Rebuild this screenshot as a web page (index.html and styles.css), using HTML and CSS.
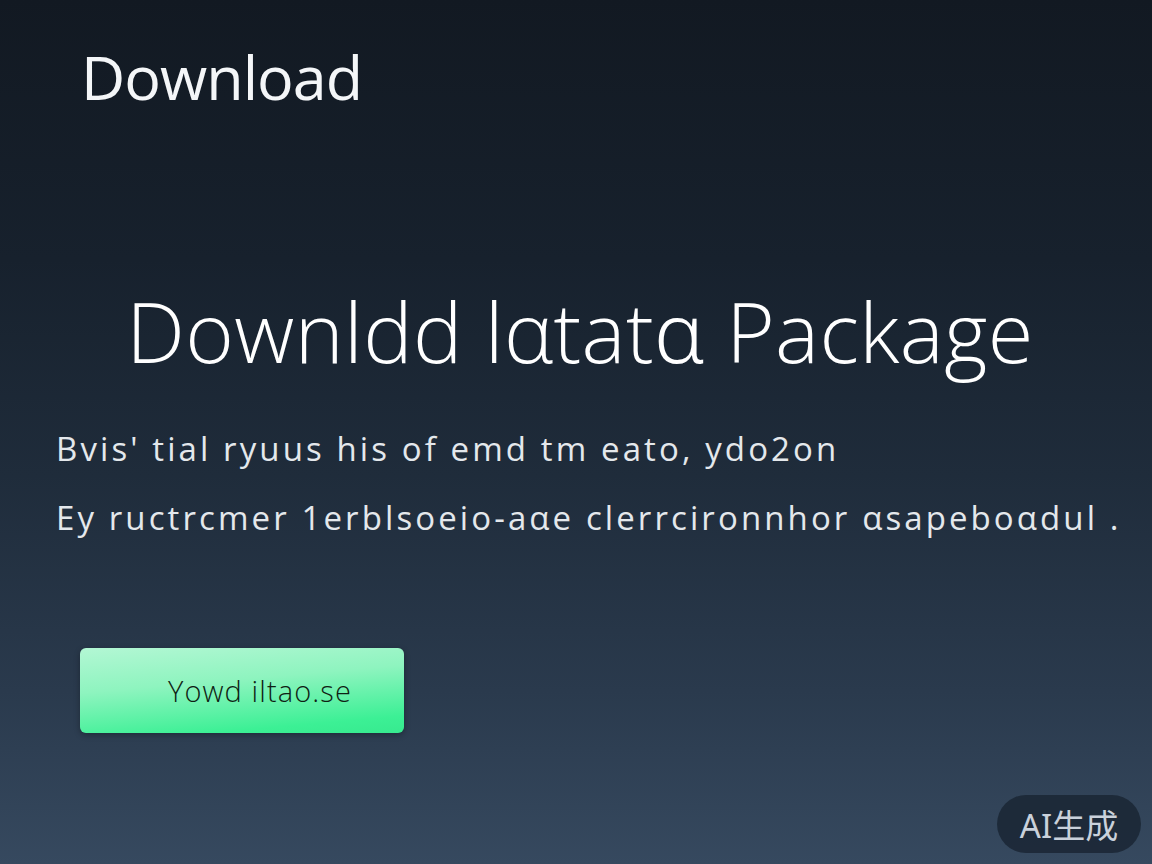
FILE: index.html
```html
<!DOCTYPE html>
<html lang="en">
<head>
<meta charset="utf-8">
<title>Download</title>
<link rel="stylesheet" href="styles.css">
</head>
<body>
<main class="page">
  <header class="top">
    <h1 class="brand">Download</h1>
  </header>
  <section class="hero">
    <h2 class="headline">Downldd lαtatɑ Package</h2>
    <p class="desc">Bvis' tial ryuus his of emd tm eato, ydo2on</p>
    <p class="desc">Ey ructrcmer 1erblsoeio-aαe clerrcironnhor αsapeboαdul .</p>
    <div class="actions">
      <button class="cta">Yowd iltao.se</button>
    </div>
  </section>
</main>
<div class="badge">AI生成</div>
</body>
</html>
```
FILE: styles.css
```css
html, body {
  margin: 0;
  height: 100%;
}
body {
  width: 1152px;
  height: 864px;
  overflow: hidden;
  background: linear-gradient(180deg, #121922 0%, #17212d 30%, #1f2c3b 55%, #2a3a4d 80%, #36495f 100%);
  font-family: "Open Sans", "Noto Sans", sans-serif;
  color: #ffffff;
  position: relative;
}
.page {
  display: flex;
  flex-direction: column;
}
.top {
  padding: 37px 0 0 81px;
}
.brand {
  margin: 0;
  font-size: 61px;
  font-weight: 400;
  line-height: 80px;
  letter-spacing: -1px;
  color: #f4f6f8;
}
.hero {
  display: flex;
  flex-direction: column;
  padding-top: 168px;
}
.headline {
  margin: 0;
  text-align: center;
  font-size: 83px;
  font-weight: 300;
  line-height: 92px;
  letter-spacing: 0.4px;
  color: #ffffff;
  padding-left: 8px;
}
.desc {
  margin: 0;
  padding-left: 56px;
  font-size: 33px;
  font-weight: 400;
  line-height: 38px;
  color: #e4e8ec;
  letter-spacing: 3.1px;
  white-space: nowrap;
}
.hero .headline + .desc {
  margin-top: 53px;
}
.desc + .desc {
  margin-top: 31px;
}
.actions {
  padding: 111px 0 0 80px;
}
.cta {
  width: 324px;
  height: 85px;
  border: none;
  border-radius: 6px;
  background: linear-gradient(175deg, #b3f7d4 0%, #8ef4bf 40%, #3cf095 85%, #37ea8f 100%);
  box-shadow: 0 2px 6px rgba(0, 0, 0, 0.3);
  color: #0f1f14;
  font-family: "Open Sans", "Noto Sans", sans-serif;
  font-size: 29px;
  font-weight: 300;
  padding: 0 0 0 36px;
  letter-spacing: 1.1px;
}
.badge {
  position: absolute;
  right: 11px;
  bottom: 11px;
  width: 144px;
  height: 58px;
  border-radius: 29px;
  background: rgba(26, 38, 52, 0.85);
  color: #c9d1db;
  font-family: "Noto Sans", "Noto Sans CJK SC", sans-serif;
  font-size: 33px;
  display: flex;
  align-items: center;
  justify-content: center;
}
```
